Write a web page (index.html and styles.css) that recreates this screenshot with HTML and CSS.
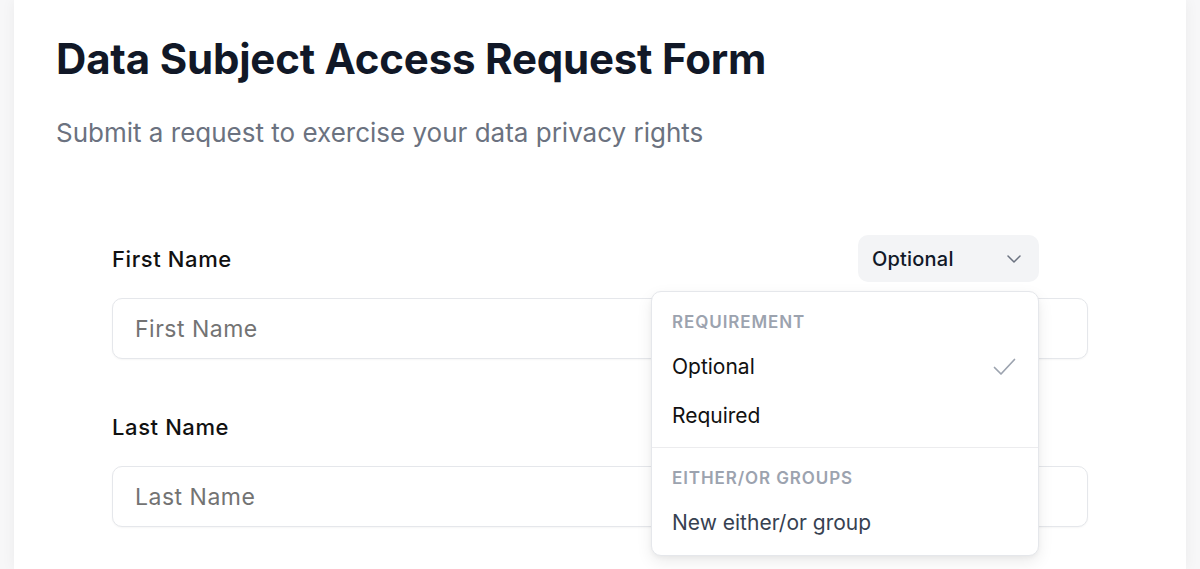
FILE: index.html
```html
<!DOCTYPE html>
<html lang="en">
<head>
<meta charset="utf-8">
<title>Data Subject Access Request Form</title>
<link rel="stylesheet" href="styles.css">
</head>
<body>
<main class="card">
  <h1 class="title">Data Subject Access Request Form</h1>
  <p class="subtitle">Submit a request to exercise your data privacy rights</p>

  <div class="fields">
    <div class="field">
      <div class="field-head">
        <label class="label" for="first">First Name</label>
        <div class="req">
          <button class="req-btn" type="button">
            <span>Optional</span>
            <svg class="chev" width="14" height="8" viewBox="0 0 14 8" fill="none"><path d="M1 1l6 6 6-6" stroke="#6b7280" stroke-width="1.5" stroke-linecap="round" stroke-linejoin="round"/></svg>
          </button>
          <div class="menu">
            <div class="menu-group">
              <div class="menu-head">REQUIREMENT</div>
              <div class="menu-item">
                <span>Optional</span>
                <svg width="23" height="18" viewBox="0 0 23 18" fill="none"><path d="M1.5 9.5l6.5 6.5L21.5 1.5" stroke="#9ca3af" stroke-width="1.7" stroke-linecap="round" stroke-linejoin="round"/></svg>
              </div>
              <div class="menu-item"><span>Required</span></div>
            </div>
            <div class="menu-group menu-group--last">
              <div class="menu-head">EITHER/OR GROUPS</div>
              <div class="menu-item menu-item--muted"><span>New either/or group</span></div>
            </div>
          </div>
        </div>
      </div>
      <input class="input" id="first" type="text" placeholder="First Name">
    </div>

    <div class="field">
      <div class="field-head">
        <label class="label" for="last">Last Name</label>
        <div class="req">
          <button class="req-btn" type="button">
            <span>Optional</span>
            <svg class="chev" width="14" height="8" viewBox="0 0 14 8" fill="none"><path d="M1 1l6 6 6-6" stroke="#6b7280" stroke-width="1.5" stroke-linecap="round" stroke-linejoin="round"/></svg>
          </button>
        </div>
      </div>
      <input class="input" id="last" type="text" placeholder="Last Name">
    </div>
  </div>
</main>
</body>
</html>
```

FILE: styles.css
```css
* { box-sizing: border-box; }

html, body {
  margin: 0;
  padding: 0;
  height: 100%;
  overflow: hidden;
}

body {
  background: #f7f7f8;
  font-family: Inter, "Noto Sans", "Liberation Sans", sans-serif;
  color: #111827;
}

.card {
  margin: 0 14px;
  min-height: 100%;
  background: #ffffff;
  box-shadow: 0 0 14px rgba(0, 0, 0, 0.05);
  padding: 31px 42px 40px;
}

.title {
  margin: 0;
  font-size: 42px;
  line-height: 56px;
  font-weight: 700;
  letter-spacing: -0.2px;
  color: #111827;
}

.subtitle {
  margin: 29px 0 0;
  font-size: 26px;
  line-height: 34px;
  color: #6b7280;
}

.fields {
  margin: 85px 56px 0;
  display: flex;
  flex-direction: column;
  gap: 44px;
}

.field {
  display: flex;
  flex-direction: column;
  gap: 16px;
}

.field-head {
  display: flex;
  align-items: center;
  justify-content: space-between;
  padding-right: 49px;
  height: 47px;
}

.label {
  font-size: 22px;
  font-weight: 500;
  letter-spacing: 0.6px;
  color: #111111;
}

.req {
  position: relative;
}

.req-btn {
  display: flex;
  align-items: center;
  justify-content: space-between;
  width: 181px;
  height: 47px;
  padding: 0 18px 0 14px;
  border: none;
  border-radius: 10px;
  background: #f3f4f6;
  font-family: inherit;
  font-size: 20px;
  font-weight: 500;
  letter-spacing: 0.2px;
  color: #111827;
}

.input {
  display: block;
  width: 100%;
  height: 61px;
  padding: 0 22px;
  border: 1.5px solid #e5e7eb;
  border-radius: 10px;
  box-shadow: 0 1px 2px rgba(0, 0, 0, 0.04);
  font-family: inherit;
  font-size: 23px;
  letter-spacing: 0.5px;
  color: #111827;
  background: #fff;
}

.input::placeholder {
  color: #737373;
}

.menu {
  position: absolute;
  top: 56px;
  right: 0;
  width: 388px;
  background: #fff;
  border: 1px solid #e5e7eb;
  border-radius: 10px;
  box-shadow: 0 6px 16px rgba(0, 0, 0, 0.08), 0 2px 4px rgba(0, 0, 0, 0.04);
  z-index: 10;
}

.menu-group {
  padding: 20px 0 7px;
  border-bottom: 1px solid #ececee;
}

.menu-group--last {
  border-bottom: none;
  padding-bottom: 8px;
}

.menu-head {
  padding: 0 20px;
  margin-bottom: 10px;
  font-size: 17px;
  line-height: 20px;
  font-weight: 600;
  letter-spacing: 0.9px;
  color: #9ca3af;
}

.menu-item {
  display: flex;
  align-items: center;
  justify-content: space-between;
  height: 49px;
  padding: 0 22px 0 20px;
  font-size: 21px;
  color: #111111;
}

.menu-item--muted {
  color: #374151;
}
```
